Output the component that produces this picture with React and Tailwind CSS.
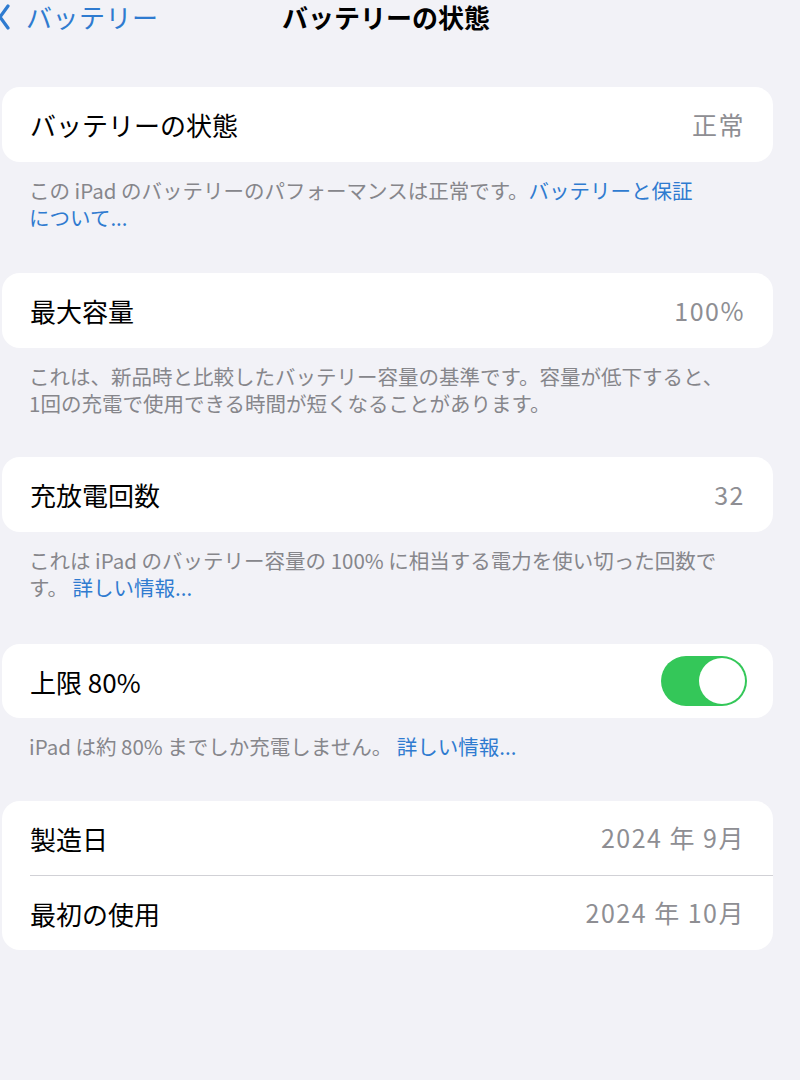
const font = { fontFamily: '"Noto Sans CJK JP", "Noto Sans", sans-serif' };

const Link = ({ children }) => <span className="text-[#2f7bd0]">{children}</span>;

const Row = ({ label, value, children, h = "h-[75px]", pr = "pr-[28px]" }) => (
  <div className={`flex items-center justify-between pl-[28px] ${h} ${pr}`}>
    <span className="text-[26px] text-black">{label}</span>
    {value && <span className="text-[25px] tracking-[1.5px] text-[#8e8e93]">{value}</span>}
    {children}
  </div>
);

const Card = ({ children }) => (
  <div className="ml-[2px] w-[771px] overflow-hidden rounded-[18px] bg-white">{children}</div>
);

const Footer = ({ children, mb }) => (
  <div className={`pl-[29px] pt-[15px] text-[20.5px] leading-[27px] text-[#86868b] ${mb}`}>
    {children}
  </div>
);

const Toggle = () => (
  <div className="flex h-[50px] w-[86px] items-center justify-end rounded-full bg-[#34c759] p-[2px]">
    <div className="h-[46px] w-[46px] rounded-full bg-white" />
  </div>
);

export default function App() {
  return (
    <div className="h-[1080px] w-[800px] overflow-hidden bg-[#f2f2f7]" style={font}>
      <div className="flex h-[32px] items-center pt-[1px]">
        <div className="flex w-[282px] items-center">
          <svg width="12" height="28" viewBox="0 0 12 28" className="-ml-[2px]">
            <path d="M10 3 L2 14 L10 25" fill="none" stroke="#2f7bd0" strokeWidth="3.2" strokeLinecap="round" strokeLinejoin="round" />
          </svg>
          <span className="ml-[16px] text-[26px] leading-none tracking-[0.5px] text-[#2f7bd0]">バッテリー</span>
        </div>
        <span className="text-[26px] font-bold leading-none text-black">バッテリーの状態</span>
      </div>

      <div className="mt-[55px]">
        <Card>
          <Row label="バッテリーの状態" value="正常" />
        </Card>
        <Footer mb="mb-[42px]">
          この iPad のバッテリーのパフォーマンスは正常です。<Link>バッテリーと保証</Link>
          <br />
          <Link>について...</Link>
        </Footer>

        <Card>
          <Row label="最大容量" value="100%" />
        </Card>
        <Footer mb="mb-[40px]">
          これは、新品時と比較したバッテリー容量の基準です。容量が低下すると、
          <br />
          1回の充電で使用できる時間が短くなることがあります。
        </Footer>

        <Card>
          <Row label="充放電回数" value="32" />
        </Card>
        <Footer mb="mb-[43px]">
          これは iPad のバッテリー容量の 100% に相当する電力を使い切った回数で
          <br />
          す。 <Link>詳しい情報...</Link>
        </Footer>

        <Card>
          <Row label="上限 80%" h="h-[74px]" pr="pr-[26px]">
            <Toggle />
          </Row>
        </Card>
        <Footer mb="mb-[41px]">
          iPad は約 80% までしか充電しません。 <Link>詳しい情報...</Link>
        </Footer>

        <Card>
          <Row label="製造日" value="2024 年 9月" h="h-[74px]" />
          <div className="ml-[28px] h-px bg-[#d1d1d6]" />
          <Row label="最初の使用" value="2024 年 10月" h="h-[74px]" />
        </Card>
      </div>
    </div>
  );
}
